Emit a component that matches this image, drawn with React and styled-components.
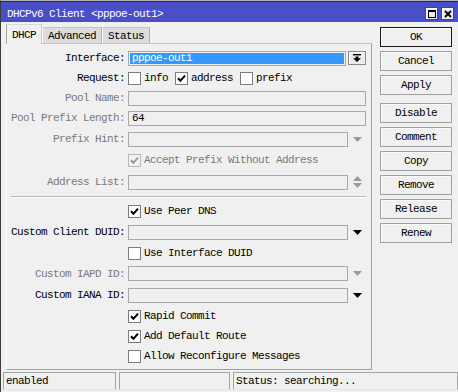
import React from "react";
import styled, { createGlobalStyle } from "styled-components";

const Global = createGlobalStyle`
  html, body { margin: 0; padding: 0; background: #f0f0f0; }
  body {
    font-family: "Liberation Mono", "DejaVu Sans Mono", monospace;
    font-size: 11px;
    letter-spacing: -0.6px;
    color: #000;
  }
  * { box-sizing: border-box; }
`;

const Window = styled.div`
  width: 458px;
  height: 392px;
  display: flex;
  flex-direction: column;
  border-top: 1px solid #b4b4b4;
  border-left: 1px solid #3c3c3c;
  background: #f0f0f0;
  overflow: hidden;
`;

const TitleBar = styled.div`
  flex: none;
  height: 21px;
  border-top: 1px solid #2c2c2c;
  background: #4a4fc8;
  display: flex;
  align-items: center;
  padding: 3px 4px 0 6px;
  color: #fff;
`;

const TitleText = styled.div`
  flex: 1;
  white-space: pre;
`;

const TitleButton = styled.div`
  width: 13px;
  height: 13px;
  margin-left: 3px;
  border: 1px solid #4a4a4a;
  background: #ebebeb;
  box-shadow: inset 1px 1px #ffffff;
  display: flex;
  align-items: center;
  justify-content: center;
`;

const Body = styled.div`
  flex: none;
  height: 348px;
  display: flex;
`;

const Main = styled.div`
  width: 366px;
  margin-left: 5px;
  padding-top: 2px;
  display: flex;
  flex-direction: column;
`;

const TabRow = styled.div`
  height: 19px;
  display: flex;
  align-items: flex-end;
  position: relative;
  z-index: 1;
`;

const Tab = styled.div`
  height: ${(p) => (p.$active ? 20 : 16)}px;
  margin-bottom: ${(p) => (p.$active ? -1 : 0)}px;
  padding: 0 5px;
  display: flex;
  align-items: center;
  background: ${(p) => (p.$active ? "#f0f0f0" : "#dcdcdc")};
  border-top: 1px solid ${(p) => (p.$active ? "#d8d8d8" : "#c4c4c4")};
  border-left: 1px solid ${(p) => (p.$active ? "#a8a8a8" : "#ffffff")};
  border-right: 1px solid ${(p) => (p.$active ? "#c8c8c8" : "#b0b0b0")};
  white-space: nowrap;
`;

const Panel = styled.div`
  height: 327px;
  border-top: 1px solid #c4c4c4;
  border-left: 1px solid #ffffff;
  border-right: 1px solid #a0a0a0;
  border-bottom: 1px solid #a0a0a0;
  padding: 4px 0 3px;
  display: flex;
  flex-direction: column;
`;

const Row = styled.div`
  height: ${(p) => p.$h || 20}px;
  display: flex;
  align-items: center;
  flex: none;
`;

const Label = styled.div`
  width: 118px;
  margin-right: 3px;
  flex: none;
  text-align: right;
  white-space: nowrap;
  color: ${(p) => (p.$muted ? "#7a7a7a" : "#000")};
`;

const Field = styled.div`
  width: ${(p) => p.$w}px;
  height: 15px;
  flex: none;
  border: 1px solid #a8a8a8;
  background: #f0f0f0;
  display: flex;
  align-items: center;
  padding: ${(p) => (p.$selected ? "1px" : "0 0 0 3px")};
  white-space: nowrap;
`;

const Highlight = styled.div`
  flex: 1;
  align-self: stretch;
  background: #3399ff;
  color: #fff;
  padding-left: 2px;
  display: flex;
  align-items: center;
`;

const DropButton = styled.div`
  width: 18px;
  height: 14px;
  margin-left: 2px;
  border: 1px solid #8a8a8a;
  background: #ececec;
  box-shadow: inset 1px 1px #ffffff;
  display: flex;
  align-items: center;
  justify-content: center;
`;

const ArrowSlot = styled.div`
  width: 18px;
  display: flex;
  align-items: center;
  justify-content: center;
`;

const CheckItem = styled.div`
  display: flex;
  align-items: center;
  margin-right: 7px;
  white-space: nowrap;
  color: ${(p) => (p.$disabled ? "#7a7a7a" : "#000")};
`;

const Box = styled.span`
  width: 13px;
  height: 13px;
  margin-right: 3px;
  flex: none;
  border: 1px solid ${(p) => (p.$disabled ? "#b8b8b8" : "#7c7c7c")};
  background: ${(p) => (p.$disabled ? "#f2f2f2" : "#ffffff")};
  display: flex;
  align-items: center;
  justify-content: center;
`;

const Separator = styled.div`
  height: 7px;
  flex: none;
  padding-top: 2px;
  margin: 0 5px 0 4px;
  &::before {
    content: "";
    display: block;
    height: 1px;
    background: #b8b8b8;
    box-shadow: 0 1px #ffffff;
  }
`;

const Side = styled.div`
  width: 72px;
  margin-left: 8px;
  padding-top: 5px;
  display: flex;
  flex-direction: column;
`;

const SideButton = styled.div`
  height: 20px;
  margin-top: ${(p) => (p.$first ? 0 : p.$sep ? 8 : 4)}px;
  border: 1px solid ${(p) => (p.$default ? "#1a1a1a" : "#a0a0a0")};
  background: #f0f0f0;
  box-shadow: inset 1px 1px #fbfbfb;
  display: flex;
  align-items: center;
  justify-content: center;
  white-space: nowrap;
`;

const StatusBar = styled.div`
  height: 18px;
  margin-top: 2px;
  padding-left: 2px;
  display: flex;
  gap: 3px;
`;

const StatusCell = styled.div`
  width: ${(p) => p.$w}px;
  height: 18px;
  border: 1px solid #a4a4a4;
  border-bottom-color: #e4e4e4;
  padding-left: 2px;
  display: flex;
  align-items: center;
  white-space: nowrap;
`;

const Tri = ({ color = "#000" }) => (
  <svg width="9" height="5" viewBox="0 0 9 5">
    <polygon points="0,0 9,0 4.5,5" fill={color} />
  </svg>
);

const UpDown = () => (
  <svg width="9" height="12" viewBox="0 0 9 12">
    <polygon points="4.5,0 9,5 0,5" fill="#9a9a9a" />
    <polygon points="0,7 9,7 4.5,12" fill="#9a9a9a" />
  </svg>
);

const DropGlyph = () => (
  <svg width="8" height="8" viewBox="0 0 8 8">
    <rect x="0" y="0" width="8" height="1.4" fill="#000" />
    <path d="M2.5 2.4h3v1.8H8L4 8 0 4.2h2.5z" fill="#000" />
  </svg>
);

const Check = ({ color = "#000" }) => (
  <svg width="9" height="9" viewBox="0 0 9 9">
    <path d="M1 4.3 L3.4 6.8 L8 1.6" stroke={color} strokeWidth="2" fill="none" />
  </svg>
);

const CheckBox = ({ checked, disabled, children }) => (
  <CheckItem $disabled={disabled}>
    <Box $disabled={disabled}>{checked && <Check color={disabled ? "#9a9a9a" : "#000"} />}</Box>
    {children}
  </CheckItem>
);

const buttons = [
  { t: "OK", def: true },
  { t: "Cancel" },
  { t: "Apply" },
  { t: "Disable", sep: true },
  { t: "Comment" },
  { t: "Copy" },
  { t: "Remove" },
  { t: "Release" },
  { t: "Renew" },
];

export default function App() {
  return (
    <>
      <Global />
      <Window>
        <TitleBar>
          <TitleText>{"DHCPv6 Client <pppoe-out1>"}</TitleText>
          <TitleButton>
            <svg width="8" height="8" viewBox="0 0 8 8">
              <rect x="0.5" y="0.5" width="7" height="7" fill="none" stroke="#000" />
              <rect x="0" y="0" width="8" height="2" fill="#000" />
            </svg>
          </TitleButton>
          <TitleButton>
            <svg width="8" height="8" viewBox="0 0 8 8">
              <path d="M1 1 L7 7 M7 1 L1 7" stroke="#000" strokeWidth="1.8" />
            </svg>
          </TitleButton>
        </TitleBar>
        <Body>
          <Main>
            <TabRow>
              <Tab $active>DHCP</Tab>
              <Tab>Advanced</Tab>
              <Tab>Status</Tab>
            </TabRow>
            <Panel>
              <Row>
                <Label>Interface:</Label>
                <Field $w={218} $selected>
                  <Highlight>pppoe-out1</Highlight>
                </Field>
                <DropButton>
                  <DropGlyph />
                </DropButton>
              </Row>
              <Row>
                <Label>Request:</Label>
                <CheckBox>info</CheckBox>
                <CheckBox checked>address</CheckBox>
                <CheckBox>prefix</CheckBox>
              </Row>
              <Row>
                <Label $muted>Pool Name:</Label>
                <Field $w={238} />
              </Row>
              <Row>
                <Label $muted>Pool Prefix Length:</Label>
                <Field $w={238}>64</Field>
              </Row>
              <Row $h={22}>
                <Label $muted>Prefix Hint:</Label>
                <Field $w={220} />
                <ArrowSlot>
                  <Tri color="#9a9a9a" />
                </ArrowSlot>
              </Row>
              <Row>
                <Label />
                <CheckBox checked disabled>
                  Accept Prefix Without Address
                </CheckBox>
              </Row>
              <Row $h={24}>
                <Label $muted>Address List:</Label>
                <Field $w={220} />
                <ArrowSlot>
                  <UpDown />
                </ArrowSlot>
              </Row>
              <Separator />
              <Row>
                <Label />
                <CheckBox checked>Use Peer DNS</CheckBox>
              </Row>
              <Row $h={22}>
                <Label>Custom Client DUID:</Label>
                <Field $w={220} />
                <ArrowSlot>
                  <Tri />
                </ArrowSlot>
              </Row>
              <Row>
                <Label />
                <CheckBox>Use Interface DUID</CheckBox>
              </Row>
              <Row $h={21}>
                <Label $muted>Custom IAPD ID:</Label>
                <Field $w={220} />
                <ArrowSlot>
                  <Tri color="#9a9a9a" />
                </ArrowSlot>
              </Row>
              <Row $h={22}>
                <Label>Custom IANA ID:</Label>
                <Field $w={220} />
                <ArrowSlot>
                  <Tri />
                </ArrowSlot>
              </Row>
              <Row>
                <Label />
                <CheckBox checked>Rapid Commit</CheckBox>
              </Row>
              <Row>
                <Label />
                <CheckBox checked>Add Default Route</CheckBox>
              </Row>
              <Row>
                <Label />
                <CheckBox>Allow Reconfigure Messages</CheckBox>
              </Row>
            </Panel>
          </Main>
          <Side>
            {buttons.map((b, i) => (
              <SideButton key={b.t} $first={i === 0} $sep={b.sep} $default={b.def}>
                {b.t}
              </SideButton>
            ))}
          </Side>
        </Body>
        <StatusBar>
          <StatusCell $w={113}>enabled</StatusCell>
          <StatusCell $w={111} />
          <StatusCell $w={225}>Status: searching...</StatusCell>
        </StatusBar>
      </Window>
    </>
  );
}
